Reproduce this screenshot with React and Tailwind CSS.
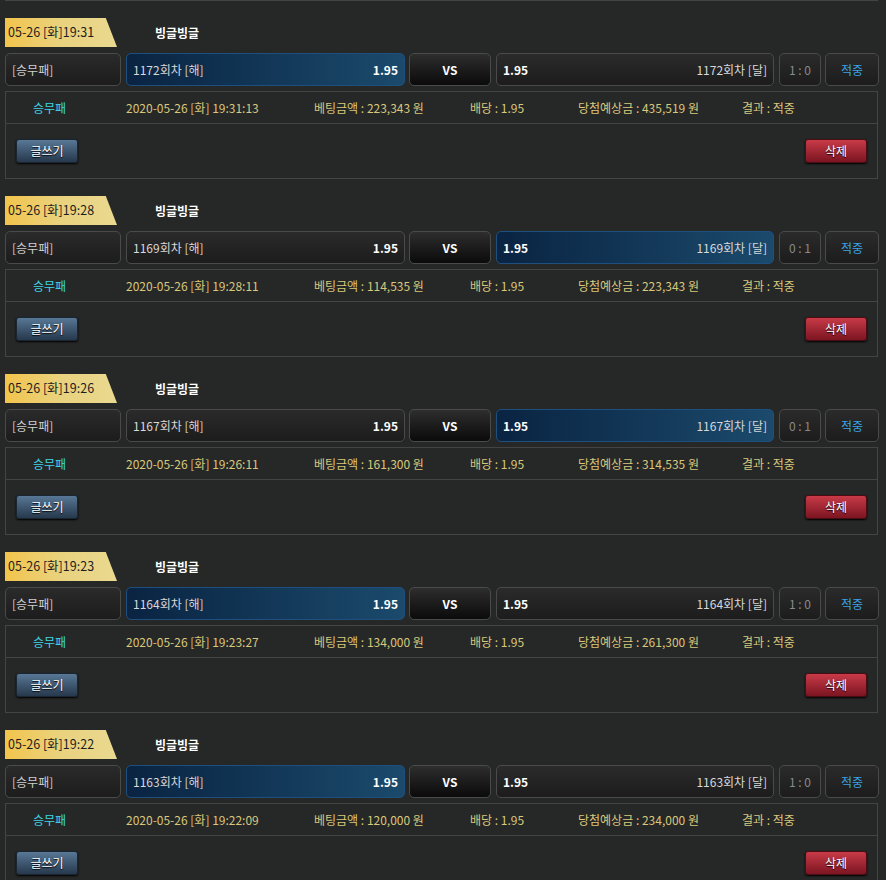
const bets = [
  { time: '19:31', round: '1172', pick: 'left', score: '1 : 0', placed: '19:31:13', amount: '223,343', payout: '435,519' },
  { time: '19:28', round: '1169', pick: 'right', score: '0 : 1', placed: '19:28:11', amount: '114,535', payout: '223,343' },
  { time: '19:26', round: '1167', pick: 'right', score: '0 : 1', placed: '19:26:11', amount: '161,300', payout: '314,535' },
  { time: '19:23', round: '1164', pick: 'left', score: '1 : 0', placed: '19:23:27', amount: '134,000', payout: '261,300' },
  { time: '19:22', round: '1163', pick: 'left', score: '1 : 0', placed: '19:22:09', amount: '120,000', payout: '234,000' },
];

const box = 'shrink-0 h-full flex items-center rounded-[5px] border border-[#4a4a4a] bg-gradient-to-b from-[#2b2b2b] to-[#1c1c1c]';
const picked = 'shrink-0 h-full flex items-center rounded-[5px] border border-[#1f4f7e] bg-gradient-to-r from-[#0a2442] to-[#1b4a6c]';

function BetBlock({ bet }) {
  return (
    <div className="pt-[17px]">
      {/* header */}
      <div className="h-[29px] flex items-center">
        <div className="ml-[5px] w-[112px] h-full flex items-center pl-[3px] text-[12.5px] text-[#1d1d1d] bg-gradient-to-r from-[#f2c44a] via-[#e9d27e] to-[#ead990] [clip-path:polygon(0_0,90%_0,100%_100%,0_100%)]">
          05-26 [화]{bet.time}
        </div>
        <span className="ml-[38px] text-[12px] font-bold text-white">빙글빙글</span>
      </div>

      {/* match row */}
      <div className="mt-[6px] h-[33px] flex pl-[5px] text-[12px] leading-none">
        <div className={`${box} w-[116px] px-[6px] text-[#cfcfcf]`}>[승무패]</div>
        <div className={`${bet.pick === 'left' ? picked : box} ml-[5px] w-[279px] px-[6px] justify-between`}>
          <span className="text-[#d8d8d8]">{bet.round}회차 [해]</span>
          <span className="font-bold text-white">1.95</span>
        </div>
        <div className="shrink-0 ml-[4px] w-[82px] h-full flex items-center justify-center rounded-[5px] border border-[#4a4a4a] bg-gradient-to-b from-[#2e2e2e] to-[#0b0b0b] font-bold text-white">
          VS
        </div>
        <div className={`${bet.pick === 'right' ? picked : box} ml-[5px] w-[278px] px-[6px] justify-between`}>
          <span className="font-bold text-white">1.95</span>
          <span className="text-[#d8d8d8]">{bet.round}회차 [달]</span>
        </div>
        <div className={`${box} ml-[5px] w-[42px] justify-center text-[#8a8a8a]`}>{bet.score}</div>
        <div className={`${box} ml-[4px] w-[54px] justify-center text-[#3aa3e6]`}>적중</div>
      </div>

      {/* detail */}
      <div className="mt-[5px] ml-[5px] w-[873px] h-[88px] border border-[#444] text-[12px]">
        <div className="h-[32px] flex items-center border-b border-[#444] pl-[27px] text-[#d9c77c]">
          <span className="w-[93px] text-[#3fd6e6]">승무패</span>
          <span className="w-[188px]">2020-05-26 [화] {bet.placed}</span>
          <span className="w-[156px]">베팅금액 : {bet.amount} 원</span>
          <span className="w-[108px]">배당 : 1.95</span>
          <span className="w-[164px]">당첨예상금 : {bet.payout} 원</span>
          <span>결과 : 적중</span>
        </div>
        <div className="flex justify-between px-[10px] pt-[15px]">
          <button className="w-[62px] h-[24px] rounded-[3px] border border-[#1b2633] bg-gradient-to-b from-[#587896] to-[#27394d] text-[12px] text-white [text-shadow:0_1px_1px_#000] shadow-[0_1px_2px_#000]">
            글쓰기
          </button>
          <button className="w-[62px] h-[24px] rounded-[3px] border border-[#4a0d14] bg-gradient-to-b from-[#c93a47] to-[#7c1522] text-[12px] text-white [text-shadow:0_1px_1px_#000] shadow-[0_1px_2px_#000]">
            삭제
          </button>
        </div>
      </div>
    </div>
  );
}

export default function App() {
  return (
    <div className="w-[886px] h-[880px] overflow-hidden bg-[#262727] font-['Noto_Sans_CJK_KR',sans-serif]">
      <div className="ml-[5px] w-[873px] h-[1px] border-x border-b border-[#444]" />
      {bets.map((b) => (
        <BetBlock key={b.round} bet={b} />
      ))}
    </div>
  );
}
